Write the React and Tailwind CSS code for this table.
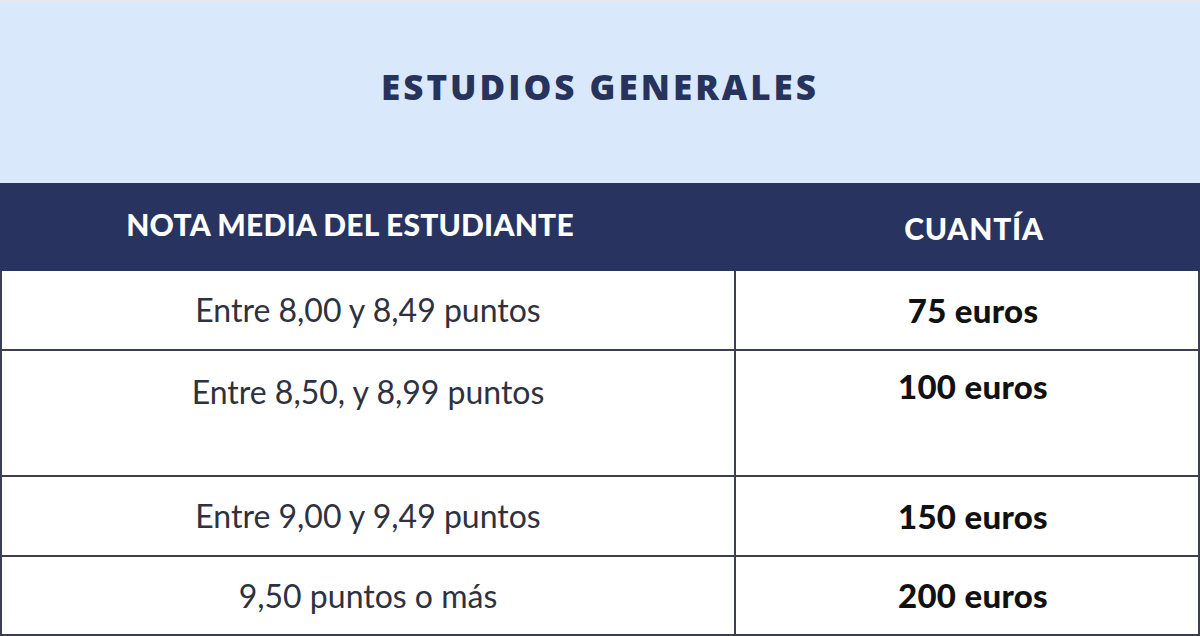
import React from "react";

const rows = [
  { left: "Entre 8,00 y 8,49 puntos", right: "75 euros", h: "h-[80px]", align: "items-center", lpt: "", rpt: "" },
  { left: "Entre 8,50, y 8,99 puntos", right: "100 euros", h: "h-[126px]", align: "items-start", lpt: "pt-[25px]", rpt: "pt-[19px]" },
  { left: "Entre 9,00 y 9,49 puntos", right: "150 euros", h: "h-[80px]", align: "items-center", lpt: "", rpt: "" },
  { left: "9,50 puntos o más", right: "200 euros", h: "h-[79px]", align: "items-center", lpt: "", rpt: "" },
];

export default function App() {
  return (
    <div className="w-[1200px] h-[636px] overflow-hidden flex flex-col bg-white" style={{ fontFamily: "Lato, 'Liberation Sans', sans-serif" }}>
      <div className="h-[183px] shrink-0 bg-[#dae8fb] border-t-2 border-[#e4e8ee] flex items-center justify-center pb-[12px]">
        <h1 className="text-[35px] font-extrabold tracking-[3px] text-[#27335c] leading-none" style={{ fontFamily: "'Open Sans', Lato, sans-serif" }}>ESTUDIOS GENERALES</h1>
      </div>
      <div className="h-[88px] shrink-0 bg-[#29335f] grid grid-cols-[736px_1fr] text-white">
        <div className="flex items-center justify-center pr-[36px] pb-[6px]">
          <span className="text-[30px] font-black tracking-[0.2px] leading-none">NOTA MEDIA DEL ESTUDIANTE</span>
        </div>
        <div className="flex items-center justify-center pl-[12px] pt-[2px]">
          <span className="text-[30px] font-black tracking-[0.8px] leading-none">CUANTÍA</span>
        </div>
      </div>
      <div className="flex flex-col border-l-2 border-r-2 border-[#3a3f52]">
        {rows.map((r, i) => (
          <div key={i} className={`${r.h} shrink-0 grid grid-cols-[734px_1fr] border-b-2 border-[#3a3f52]`}>
            <div className={`flex ${r.align} justify-center border-r-2 border-[#3a3f52] ${r.lpt}`}>
              <span className="text-[32px] text-[#2d3140] leading-none">{r.left}</span>
            </div>
            <div className={`flex ${r.align} justify-center pl-[12px] ${r.rpt}`}>
              <span className="text-[33px] font-black text-[#111111] leading-none tracking-[0.3px]">{r.right}</span>
            </div>
          </div>
        ))}
      </div>
    </div>
  );
}
